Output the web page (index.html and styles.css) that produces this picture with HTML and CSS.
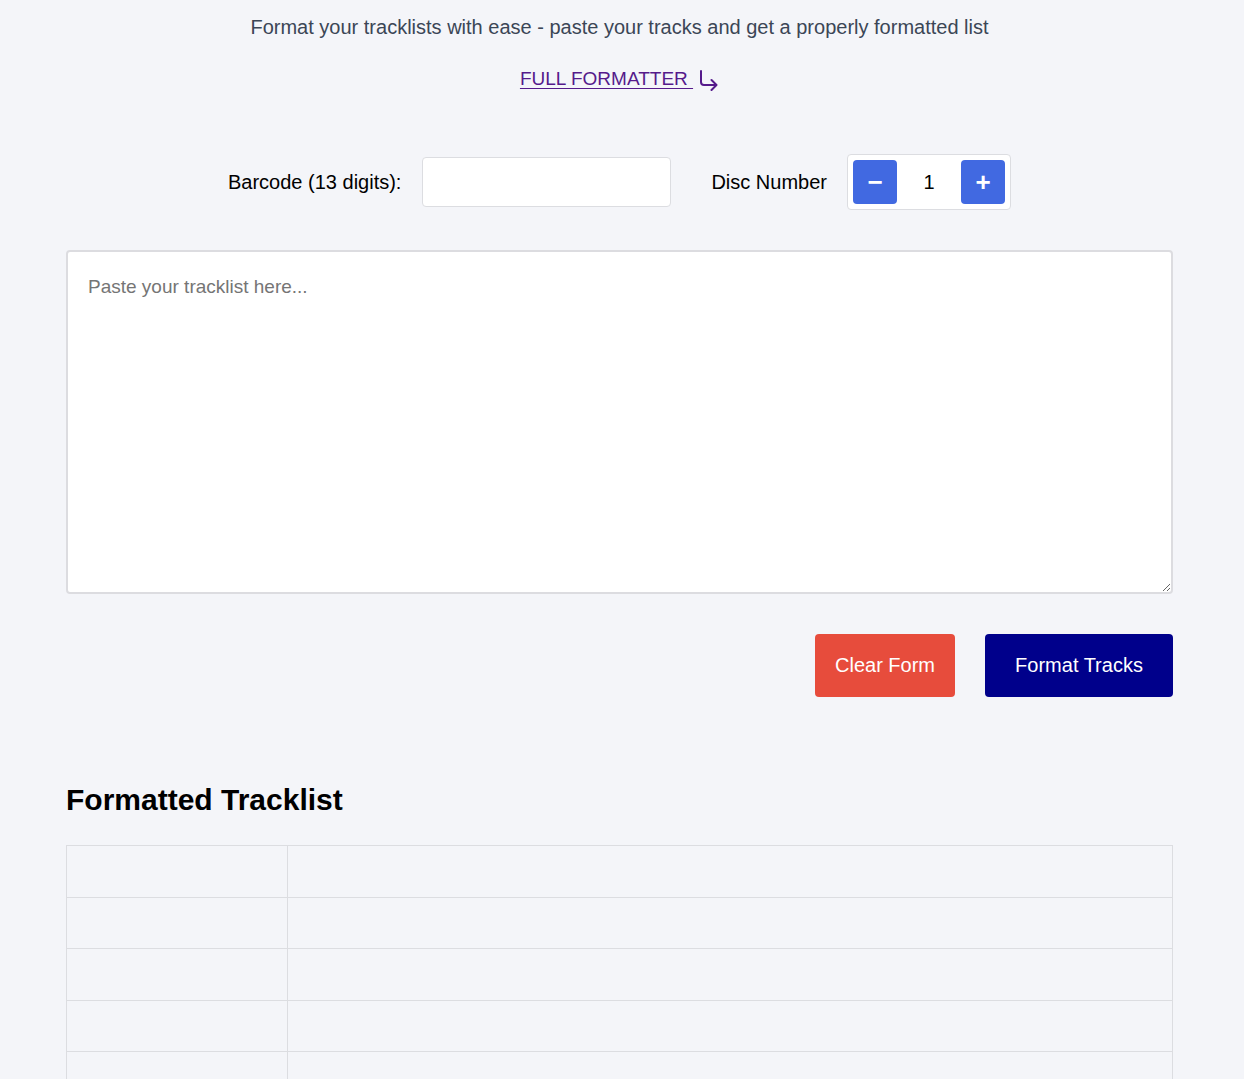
FILE: index.html
```html
<!DOCTYPE html>
<html lang="en">
<head>
<meta charset="utf-8">
<title>Tracklist Formatter</title>
<link rel="stylesheet" href="styles.css">
</head>
<body>
<div class="container">
  <p class="subtitle">Format your tracklists with ease - paste your tracks and get a properly formatted list</p>
  <div class="link-row">
    <a class="full-link" href="#">FULL FORMATTER </a>
    <svg class="arrow" width="20" height="22" viewBox="0 0 20 22" aria-hidden="true">
      <path d="M2 2 V13 Q2 16 5 16 H17" fill="none" stroke="#551a8b" stroke-width="2" stroke-linecap="round" stroke-linejoin="round"/>
      <path d="M12.5 11 L17.5 16 L12.5 21" fill="none" stroke="#551a8b" stroke-width="2" stroke-linecap="round" stroke-linejoin="round"/>
    </svg>
  </div>
  <div class="meta-row">
    <label class="meta-label" for="barcode">Barcode (13 digits):</label>
    <input class="barcode-input" id="barcode" type="text">
    <span class="meta-label disc-label">Disc Number</span>
    <div class="stepper">
      <button class="step-btn" type="button">&minus;</button>
      <span class="step-value">1</span>
      <button class="step-btn" type="button">+</button>
    </div>
  </div>
  <textarea class="tracklist" placeholder="Paste your tracklist here..."></textarea>
  <div class="actions">
    <button class="btn btn-clear" type="button">Clear Form</button>
    <button class="btn btn-format" type="button">Format Tracks</button>
  </div>
  <h2 class="result-title">Formatted Tracklist</h2>
  <table class="result-table">
    <tr><td class="col-num"></td><td></td></tr>
    <tr><td class="col-num"></td><td></td></tr>
    <tr><td class="col-num"></td><td></td></tr>
    <tr><td class="col-num"></td><td></td></tr>
    <tr><td class="col-num"></td><td></td></tr>
  </table>
</div>
</body>
</html>
```

FILE: styles.css
```css
html, body {
  margin: 0;
  padding: 0;
  background: #f4f5f9;
  font-family: "Liberation Sans", Arial, sans-serif;
  color: #000;
}

.container {
  width: 1107px;
  margin-left: 66px;
  padding-top: 16px;
}

.subtitle {
  margin: 0;
  text-align: center;
  font-size: 20px;
  line-height: 23px;
  color: #3b4656;
}

.link-row {
  margin-top: 28px;
  display: flex;
  justify-content: center;
  align-items: center;
  font-size: 19px;
  line-height: 23px;
}

.full-link {
  color: #551a8b;
  text-decoration: underline;
  text-underline-offset: 3px;
  white-space: pre;
}

.arrow {
  display: block;
  margin-left: 6px;
  position: relative;
  top: 1px;
}

.meta-row {
  margin-top: 64px;
  display: flex;
  justify-content: center;
  align-items: center;
}

.meta-label {
  font-size: 20px;
  margin-right: 21px;
}

.disc-label {
  margin-left: 40px;
  margin-right: 20px;
}

.barcode-input {
  width: 249px;
  height: 50px;
  box-sizing: border-box;
  border: 1px solid #dcdde1;
  border-radius: 4px;
  background: #fff;
  font-size: 18px;
  padding: 0 10px;
}

.stepper {
  display: flex;
  align-items: center;
  background: #fff;
  border: 1px solid #dcdde1;
  border-radius: 4px;
  padding: 5px;
}

.step-btn {
  width: 44px;
  height: 44px;
  border: none;
  border-radius: 4px;
  background: #4169e1;
  color: #fff;
  font-family: "Liberation Sans", Arial, sans-serif;
  font-size: 26px;
  font-weight: bold;
  line-height: 44px;
  padding: 0;
}

.step-value {
  width: 64px;
  text-align: center;
  font-size: 20px;
}

.tracklist {
  display: block;
  margin-top: 40px;
  width: 1107px;
  height: 344px;
  box-sizing: border-box;
  border: 2px solid #dcdce0;
  border-radius: 4px;
  background: #fff;
  padding: 23px 20px;
  font-family: "Liberation Sans", Arial, sans-serif;
  font-size: 19px;
  line-height: 1.3;
  resize: vertical;
}

.tracklist::placeholder {
  color: #757575;
}

.actions {
  margin-top: 40px;
  display: flex;
  justify-content: flex-end;
  gap: 30px;
}

.btn {
  height: 63px;
  border: none;
  border-radius: 4px;
  color: #fff;
  font-family: "Liberation Sans", Arial, sans-serif;
  font-size: 20px;
  padding: 0 20px;
}

.btn-clear {
  width: 140px;
  background: #e74c3c;
}

.btn-format {
  width: 188px;
  background: #00008b;
}

.result-title {
  margin: 86px 0 0;
  font-size: 30px;
  line-height: 34px;
  font-weight: bold;
}

.result-table {
  margin-top: 28px;
  width: 1107px;
  border-collapse: collapse;
}

.result-table td {
  border: 1px solid #dcdde1;
  height: 50.5px;
  padding: 0;
}

.result-table .col-num {
  width: 220px;
}
```
